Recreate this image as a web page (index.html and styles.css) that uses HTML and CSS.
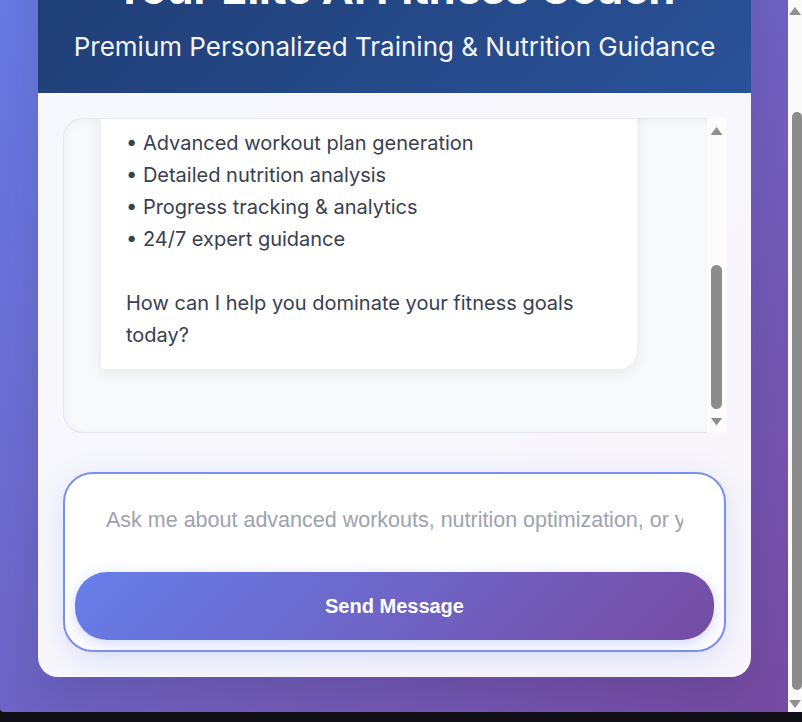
FILE: index.html
```html
<!DOCTYPE html>
<html lang="en">
<head>
<meta charset="utf-8">
<title>Elite AI Fitness Coach</title>
<link rel="stylesheet" href="styles.css">
</head>
<body>
<div class="window">
  <div class="viewport">
    <div class="page">
      <main class="card">
        <header class="hero">
          <h1>Your Elite AI Fitness Coach</h1>
          <p>Premium Personalized Training &amp; Nutrition Guidance</p>
        </header>
        <section class="content">
          <div class="chat">
            <div class="messages">
              <div class="message-list">
                <div class="bubble">Welcome to your Elite AI Fitness Coach!

I'm your premium personal trainer and nutrition expert, ready to help you achieve extraordinary results with science-based programming.

Premium features:
• Advanced workout plan generation
• Detailed nutrition analysis
• Progress tracking &amp; analytics
• 24/7 expert guidance

How can I help you dominate your fitness goals today?</div>
              </div>
            </div>
            <div class="chat-scrollbar" aria-hidden="true">
              <div class="sb-button sb-button-up"><span class="arrow arrow-up"></span></div>
              <div class="sb-track"><div class="sb-thumb chat-thumb"></div></div>
              <div class="sb-button sb-button-down"><span class="arrow arrow-down"></span></div>
            </div>
          </div>
          <form class="composer">
            <input class="composer-input" type="text" placeholder="Ask me about advanced workouts, nutrition optimization, or your fitness goals..." autofocus>
            <button class="send-button" type="button">Send Message</button>
          </form>
        </section>
      </main>
    </div>
  </div>
  <div class="page-scrollbar" aria-hidden="true">
    <div class="psb-up"><span class="arrow arrow-up"></span></div>
    <div class="psb-track"><div class="sb-thumb page-thumb"></div></div>
    <div class="psb-down"><span class="arrow arrow-down"></span></div>
  </div>
</div>
<div class="taskbar"></div>
</body>
</html>
```
FILE: styles.css
```css
html, body {
  margin: 0;
  height: 100%;
  overflow: hidden;
  background: #0e0e14;
}

body {
  font-family: Inter, "Noto Sans", sans-serif;
  line-height: 1.6;
  color: #374151;
}

.window {
  height: 712px;
  display: flex;
  border-bottom-left-radius: 4px;
  overflow: hidden;
}

.viewport {
  flex: 1;
  overflow: hidden;
  display: flex;
  flex-direction: column-reverse;
}

.page {
  flex-shrink: 0;
  padding: 40px 37px 35px 38px;
  background: linear-gradient(135deg, #667eea 0%, #764ba2 100%);
}

/* page scrollbar */
.page-scrollbar {
  width: 14px;
  background: #fafafa;
  display: flex;
  flex-direction: column;
}

.psb-up {
  height: 22px;
  display: flex;
  justify-content: center;
  align-items: flex-start;
  padding-top: 7px;
  box-sizing: border-box;
}

.psb-track {
  flex: 1;
  display: flex;
  flex-direction: column;
  padding: 90px 0 0 4px;
}

.page-thumb {
  flex: 1;
  width: 10px;
}

.psb-down {
  height: 22px;
  display: flex;
  justify-content: center;
  align-items: flex-start;
  padding-top: 10px;
  box-sizing: border-box;
}

.sb-thumb {
  background: #8c8c8c;
  border-radius: 6px;
}

.arrow {
  display: block;
  width: 12px;
  height: 8px;
  background: #8f8f8f;
}

.arrow-up {
  clip-path: polygon(50% 0, 100% 100%, 0 100%);
}

.arrow-down {
  clip-path: polygon(0 0, 100% 0, 50% 100%);
}

/* card */
.card {
  display: block;
  background: rgba(255, 255, 255, 0.95);
  border-radius: 20px;
  overflow: hidden;
  box-shadow: 0 20px 40px rgba(0, 0, 0, 0.1);
}

.hero {
  background: linear-gradient(135deg, #1e3c72 0%, #2a5298 100%);
  color: #ffffff;
  text-align: center;
  padding: 50px 30px 25px;
}

.hero h1 {
  margin: 0 0 4px;
  font-size: 43px;
  font-weight: 700;
}

.hero p {
  margin: 0;
  font-size: 26px;
  opacity: 0.95;
}

.content {
  padding: 25px;
  display: flex;
  flex-direction: column;
  gap: 39px;
}

/* chat */
.chat {
  height: 315px;
  display: flex;
}

.messages {
  flex: 1;
  box-sizing: border-box;
  border: 1px solid #e5e7eb;
  border-right: none;
  border-radius: 20px 0 0 20px;
  background: #f8f9fb;
  box-shadow: inset 2px 2px 10px rgba(0, 0, 0, 0.035);
  overflow: hidden;
  display: flex;
  flex-direction: column-reverse;
}

.message-list {
  flex-shrink: 0;
  padding: 20px 69px 62px 36px;
}

.bubble {
  background: #ffffff;
  border: 1px solid #eef0f4;
  border-radius: 20px 20px 20px 4px;
  box-shadow: 0 4px 15px rgba(0, 0, 0, 0.06);
  padding: 18px 24px 18px 25px;
  font-size: 20px;
  line-height: 32px;
  color: #374151;
  white-space: pre-line;
}

.chat-scrollbar {
  width: 19px;
  background: #fcfcfc;
  display: flex;
  flex-direction: column;
  align-items: center;
}

.sb-button {
  display: flex;
  justify-content: center;
  align-items: center;
}

.sb-button-up {
  height: 26px;
}

.sb-button-down {
  height: 23px;
}

.sb-track {
  flex: 1;
  display: flex;
  flex-direction: column;
  justify-content: flex-end;
  padding-bottom: 1px;
}

.chat-thumb {
  width: 11px;
  height: 144px;
}

/* composer */
.composer {
  display: flex;
  flex-direction: column;
  gap: 16px;
  padding: 10px;
  border: 2px solid #7b8ff0;
  border-radius: 30px;
  background: #ffffff;
  box-shadow: 0 8px 30px rgba(102, 126, 234, 0.18);
}

.composer-input {
  height: 72px;
  box-sizing: border-box;
  padding: 0 31px 0 30px;
  border: none;
  border-left: 1px solid transparent;
  outline: none;
  background: transparent;
  font-family: "Liberation Sans", Arial, sans-serif;
  font-size: 21.5px;
  color: #374151;
  caret-color: #111827;
}

.composer-input::placeholder {
  color: #9ca3af;
}

.send-button {
  height: 68px;
  border: none;
  border-radius: 32px;
  background: linear-gradient(135deg, #667eea 0%, #764ba2 100%);
  color: #ffffff;
  font-family: "Liberation Sans", Arial, sans-serif;
  font-size: 20px;
  font-weight: 700;
  cursor: pointer;
  box-shadow: 0 4px 15px rgba(102, 126, 234, 0.3);
}

.taskbar {
  height: 10px;
  background: #0e0e14;
}
```
